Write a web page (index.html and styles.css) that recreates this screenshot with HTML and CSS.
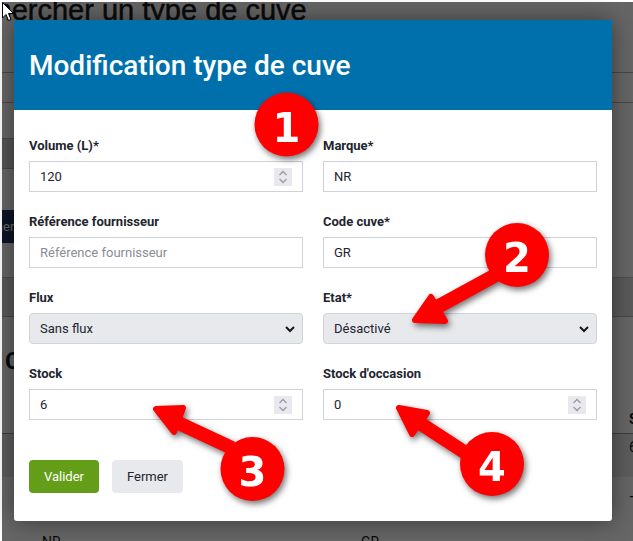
FILE: index.html
```html
<!DOCTYPE html>
<html lang="fr">
<head>
  <meta charset="UTF-8">
  <title>Modification type de cuve</title>
  <link rel="stylesheet" href="styles.css">
</head>
<body>
  <div class="screen">
    <div class="page">
      <h1 class="page-title">Rechercher un type de cuve</h1>
      <div class="filter-row">
        <span class="filter-text">Volume (L)</span>
      </div>
      <div class="band-left"></div>
      <div class="nav-button"><span>Rechercher</span></div>
      <div class="band-full"></div>
      <h2 class="list-title">Cuves</h2>
      <div class="table-head"><span>Stock</span></div>
      <div class="table-row"><span>6</span></div>
      <div class="table-dash">—</div>
      <div class="table-last">
        <span class="cell-marque">NR</span>
        <span class="cell-code">GR</span>
      </div>
    </div>
    <div class="backdrop"></div>

    <div class="modal">
      <div class="modal-header">
        <h2>Modification type de cuve</h2>
      </div>
      <form class="modal-body">
        <div class="form-grid">
          <div class="field">
            <label>Volume (L)*</label>
            <div class="number-input">
              <input type="text" value="120">
              <span class="spin"><svg width="10" height="14" viewBox="0 0 10 14"><path d="M1.5 5 5 1.5 8.5 5M1.5 9 5 12.5 8.5 9"/></svg></span>
            </div>
          </div>
          <div class="field">
            <label>Marque*</label>
            <input class="text-input" type="text" value="NR">
          </div>
          <div class="field">
            <label>Référence fournisseur</label>
            <input class="text-input" type="text" placeholder="Référence fournisseur">
          </div>
          <div class="field">
            <label>Code cuve*</label>
            <input class="text-input" type="text" value="GR">
          </div>
          <div class="field">
            <label>Flux</label>
            <div class="select-wrap">
              <select class="select-input"><option>Sans flux</option></select>
              <svg class="chevron" width="12" height="8" viewBox="0 0 12 8"><path d="M2 2 6 6 10 2"/></svg>
            </div>
          </div>
          <div class="field">
            <label>Etat*</label>
            <div class="select-wrap">
              <select class="select-input"><option>Désactivé</option></select>
              <svg class="chevron" width="12" height="8" viewBox="0 0 12 8"><path d="M2 2 6 6 10 2"/></svg>
            </div>
          </div>
          <div class="field">
            <label>Stock</label>
            <div class="number-input">
              <input type="text" value="6">
              <span class="spin"><svg width="10" height="14" viewBox="0 0 10 14"><path d="M1.5 5 5 1.5 8.5 5M1.5 9 5 12.5 8.5 9"/></svg></span>
            </div>
          </div>
          <div class="field">
            <label>Stock d'occasion</label>
            <div class="number-input">
              <input type="text" value="0">
              <span class="spin"><svg width="10" height="14" viewBox="0 0 10 14"><path d="M1.5 5 5 1.5 8.5 5M1.5 9 5 12.5 8.5 9"/></svg></span>
            </div>
          </div>
        </div>
        <div class="actions">
          <button type="button" class="btn btn-valider">Valider</button>
          <button type="button" class="btn btn-fermer">Fermer</button>
        </div>
      </form>
    </div>

    <!-- annotations added on top of the screenshot -->
    <svg class="notes" width="633" height="541" viewBox="0 0 633 541">
      <g class="note">
        <circle cx="286.5" cy="124.5" r="32"/>
        <text x="286.5" y="142">1</text>
      </g>
      <g class="note">
        <path class="shaft" d="M505 270 430 311"/>
        <path class="head" d="M415 320 431 297 445 321Z"/>
        <circle cx="517" cy="255" r="32"/>
        <text x="517" y="272">2</text>
      </g>
      <g class="note">
        <path class="shaft" d="M232 448 172 420"/>
        <path class="head" d="M156 409 183 408 174 432Z"/>
        <circle cx="252.500" cy="469" r="32"/>
        <text x="252.500" y="486">3</text>
      </g>
      <g class="note">
        <path class="shaft" d="M475 459 415 420"/>
        <path class="head" d="M399 408 427 413 412 434Z"/>
        <circle cx="492" cy="464" r="32"/>
        <text x="492" y="481">4</text>
      </g>
    </svg>

    <svg class="cursor" width="14" height="20" viewBox="0 0 14 20">
      <path d="M.5.5V16L4 12.500 6.500 18.500 9 17.500 6.500 11.500H11.500Z"/>
    </svg>
  </div>
</body>
</html>
```

FILE: styles.css
```css
* {
  box-sizing: border-box;
}
html, body {
  margin: 0;
  background: #fff;
}
body {
  font-family: Roboto, "Liberation Sans", sans-serif;
  font-size: 13px;
  color: #22252e;
}
.screen {
  position: relative;
  width: 633px;
  height: 541px;
  overflow: hidden;
}

/* page behind the modal */
.page {
  position: absolute;
  top: 2px;
  left: 2px;
  width: 631px;
  height: 539px;
  overflow: hidden;
  background: #fff;
  color: #1a1a1a;
}
.page-title {
  margin: -10px 0 0 -58px;
  height: 80px;
  font-family: "Liberation Sans", sans-serif;
  font-size: 29px;
  line-height: 36px;
  font-weight: 400;
  -webkit-text-stroke: 0.5px #1a1a1a;
  white-space: nowrap;
}
.filter-row {
  height: 31px;
  border-top: 1px solid #b4b4b4;
  border-bottom: 1px solid #b4b4b4;
  padding-top: 7px;
  margin-bottom: 35px;
}
.filter-text {
  margin-left: -64px;
}
.band-left {
  width: 200px;
  height: 31px;
  background: #d4d4d4;
  border-top: 1px solid #b4b4b4;
  border-bottom: 1px solid #b4b4b4;
  margin-bottom: 41px;
}
.nav-button {
  width: 200px;
  height: 33px;
  margin-bottom: 34px;
  padding-top: 9px;
  background: #24345f;
  color: #fff;
  overflow: hidden;
  white-space: nowrap;
}
.nav-button span {
  margin-left: -53px;
}
.band-full {
  height: 40px;
  background: #e0e0e0;
  border-top: 1px solid #c4c4c4;
  border-bottom: 1px solid #b4b4b4;
  margin-bottom: 30px;
}
.list-title {
  margin: 0 0 0 3px;
  height: 60px;
  font-size: 24px;
  line-height: 28px;
  font-weight: 700;
}
.table-head {
  height: 27px;
  padding: 5px 0 0 627px;
  font-weight: 700;
  font-size: 14px;
  line-height: 14px;
  border-bottom: 1px solid #9a9aa8;
  white-space: nowrap;
}
.table-row {
  height: 43px;
  padding: 5px 0 0 627px;
  background: #e8e8e8;
  font-size: 14px;
}
.table-dash {
  height: 57px;
  padding: 12px 0 0 627px;
  font-size: 14px;
}
.table-last {
  display: flex;
  font-size: 14px;
  padding-left: 40px;
}
.cell-marque {
  width: 319px;
}
.backdrop {
  position: absolute;
  inset: 2px 0 0 2px;
  background: rgba(0, 0, 0, 0.6);
}

/* modal */
.modal {
  position: absolute;
  top: 20px;
  left: 14px;
  width: 598px;
  height: 501px;
  background: #fff;
  border-radius: 0 0 3px 3px;
  box-shadow: 0 0 24px rgba(0, 0, 0, 0.45);
}
.modal-header {
  height: 90px;
  background: #0070ad;
  color: #fff;
  padding: 0 15px;
  display: flex;
  align-items: center;
}
.modal-header h2 {
  margin: 0;
  font-size: 28px;
  font-weight: 500;
}
.modal-body {
  padding: 27px 15px 0;
}
.form-grid {
  display: grid;
  grid-template-columns: 274px 274px;
  column-gap: 20px;
  row-gap: 21px;
}
.field label {
  display: block;
  height: 18px;
  margin-bottom: 6px;
  font-size: 13px;
  line-height: 18px;
  font-weight: 700;
}
.text-input,
.number-input,
.select-input {
  display: block;
  width: 274px;
  height: 31px;
  font-family: inherit;
  font-size: 13px;
  color: #22252e;
  border: 1px solid #d0d2da;
  background: #fff;
}
.text-input {
  padding: 0 10px;
  outline: none;
}
.text-input::placeholder {
  color: #8a8d96;
  opacity: 1;
}
.number-input {
  display: flex;
  align-items: center;
  padding-right: 10px;
}
.number-input input {
  flex: 1;
  min-width: 0;
  height: 100%;
  padding: 0 10px;
  border: 0;
  outline: none;
  font: inherit;
  color: inherit;
  background: transparent;
}
.spin {
  display: flex;
  align-items: center;
  justify-content: center;
  width: 18px;
  height: 18px;
  background: #e8e8ee;
}
.spin path {
  fill: none;
  stroke: #9a9aa6;
  stroke-width: 1.3;
}
.select-wrap {
  position: relative;
}
.select-input {
  appearance: none;
  padding: 0 10px;
  background: #e8e9ed;
  border-radius: 4px;
}
.chevron {
  position: absolute;
  top: 12px;
  right: 7px;
}
.chevron path {
  fill: none;
  stroke: #15171c;
  stroke-width: 2;
}
.actions {
  display: flex;
  gap: 13px;
  margin-top: 40px;
}
.btn {
  height: 33px;
  border: 0;
  border-radius: 4px;
  font-family: inherit;
  font-size: 13px;
}
.btn-valider {
  width: 70px;
  background: #649e18;
  color: #fff;
}
.btn-fermer {
  width: 71px;
  background: #e8e9ed;
  color: #22252e;
}

/* annotations */
.notes {
  position: absolute;
  top: 0;
  left: 0;
}
.note {
  filter: drop-shadow(2px 3px 3px rgba(0, 0, 0, 0.55));
}
.note circle {
  fill: #ff0000;
}
.note text {
  fill: #fff;
  font-family: "DejaVu Sans", sans-serif;
  font-size: 40px;
  font-weight: 700;
  text-anchor: middle;
}
.shaft {
  fill: none;
  stroke: #ff0000;
  stroke-width: 14;
}
.head {
  fill: #ff0000;
  stroke: #ff0000;
  stroke-width: 6;
  stroke-linejoin: round;
}
.cursor {
  position: absolute;
  top: 2px;
  left: 2px;
}
.cursor path {
  fill: #fff;
  stroke: #000;
  stroke-width: 1;
}
```
